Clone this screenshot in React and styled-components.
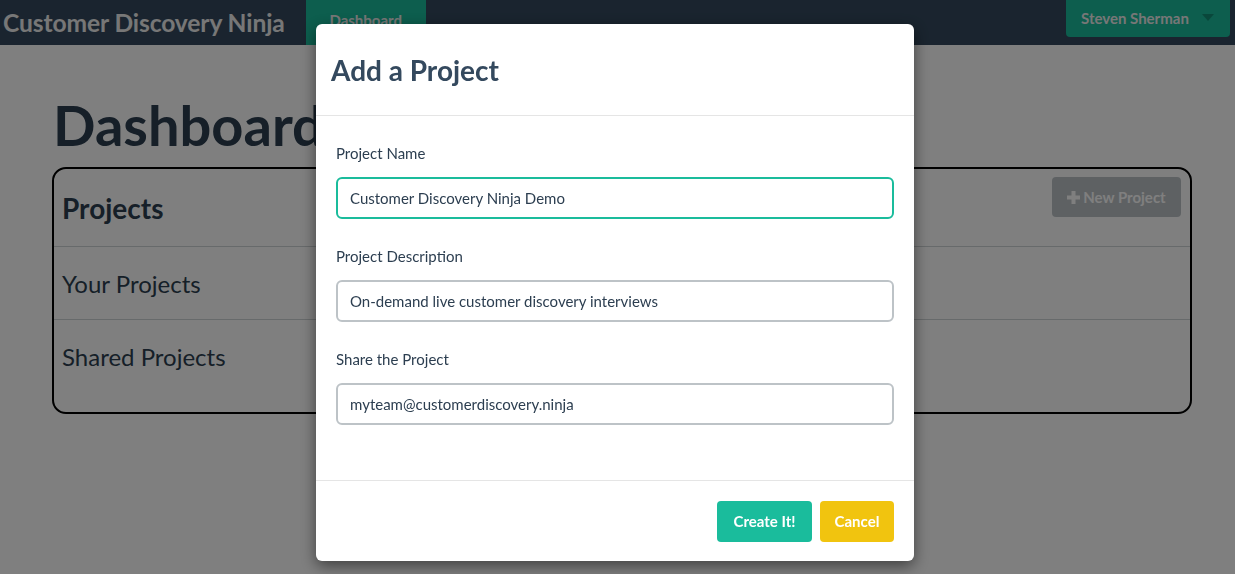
import React from 'react'
import styled, { createGlobalStyle } from 'styled-components'

const Global = createGlobalStyle`
  html, body { margin:0; padding:0; }
  body {
    font-family: Lato, "Open Sans", "Liberation Sans", sans-serif;
    background:#ffffff;
    color:#2c3e50;
    height:574px;
    overflow:hidden;
  }
  * { box-sizing:border-box; }
`

const Navbar = styled.nav`
  height:45px;
  background:#34495e;
  display:flex;
  align-items:stretch;
  padding:0 5px 0 3px;
`

const Brand = styled.div`
  font-size:24.6px;
  font-weight:700;
  color:#eeeeee;
  display:flex;
  align-items:center;
  margin-right:21px;
  letter-spacing:-0.1px;
`

const NavTab = styled.div`
  background:#1abc9c;
  color:#eeeeee;
  font-weight:700;
  font-size:15px;
  width:120px;
  display:flex;
  justify-content:center;
  padding-top:11px;
`

const UserMenu = styled.div`
  margin-left:auto;
  height:37px;
  width:164px;
  background:#1abc9c;
  border-radius:0 0 4px 4px;
  color:#eeeeee;
  font-weight:700;
  font-size:15px;
  display:flex;
  align-items:center;
  padding:0 0 2px 15px;
`

const Caret = styled.span`
  margin-left:auto;
  margin-right:16px;
  width:0;
  height:0;
  border-left:6px solid transparent;
  border-right:6px solid transparent;
  border-top:7px solid #128f76;
`

const Main = styled.main`
  padding:0 43px 0 52px;
`

const PageTitle = styled.h1`
  margin:48px 0 10px 1px;
  font-size:56px;
  line-height:64px;
  font-weight:700;
  color:#2c3e50;
`

const Panel = styled.section`
  border:2px solid #000;
  border-radius:14px;
  height:247px;
`

const PanelRow = styled.div`
  height:${p => p.$h}px;
  display:flex;
  align-items:center;
  justify-content:space-between;
  padding:0 8px 0 8px;
  border-bottom:${p => (p.$last ? 'none' : '1px solid #cfd4d6')};
`

const PanelTitle = styled.h2`
  margin:0;
  font-size:28px;
  font-weight:700;
  color:#2c3e50;
`

const RowTitle = styled.h3`
  margin:0;
  font-size:24px;
  font-weight:400;
  color:#2c3e50;
`

const GrayButton = styled.button`
  align-self:flex-start;
  margin-top:8px;
  background:#bdc3c7;
  border:none;
  border-radius:4px;
  color:#ffffff;
  font-family:inherit;
  font-weight:700;
  font-size:15px;
  height:40px;
  width:129px;
  display:flex;
  align-items:center;
  justify-content:center;
  gap:3px;
  margin-right:1px;
`

const Overlay = styled.div`
  position:fixed;
  inset:0;
  background:rgba(0,0,0,0.5);
  display:flex;
  justify-content:center;
  padding-right:5px;
`

const Modal = styled.div`
  margin-top:24px;
  width:598px;
  height:537px;
  background:#ffffff;
  border-radius:6px;
  box-shadow:0 5px 15px rgba(0,0,0,0.5);
  display:flex;
  flex-direction:column;
`

const ModalHeader = styled.div`
  height:92px;
  border-bottom:1px solid #e5e5e5;
  display:flex;
  align-items:center;
  padding:0 15px;
`

const ModalTitle = styled.h4`
  margin:0;
  font-size:28px;
  font-weight:700;
  color:#34495e;
`

const ModalBody = styled.div`
  flex:1;
  padding:27px 20px 0;
  display:flex;
  flex-direction:column;
  gap:27px;
  border-bottom:1px solid #e5e5e5;
`

const Field = styled.div`
  display:flex;
  flex-direction:column;
`

const Label = styled.label`
  font-size:15px;
  color:#2c3e50;
  margin-bottom:14px;
  line-height:20px;
`

const Input = styled.input`
  height:42px;
  border:2px solid ${p => (p.$focus ? '#1abc9c' : '#bdc3c7')};
  border-radius:6px;
  padding:0 12px;
  font-family:inherit;
  font-size:15px;
  color:#2c3e50;
  outline:none;
  caret-color:#2c3e50;
`

const ModalFooter = styled.div`
  height:80px;
  display:flex;
  justify-content:flex-end;
  align-items:center;
  gap:8px;
  padding:0 20px 0 0;
`

const Button = styled.button`
  background:${p => p.$bg};
  border:none;
  border-radius:4px;
  color:#ffffff;
  font-family:inherit;
  font-weight:700;
  font-size:15px;
  height:41px;
  width:${p => p.$w}px;
`

const PlusIcon = () => (
  <svg width="13" height="13" viewBox="0 0 13 13">
    <rect x="4.5" y="0" width="4" height="13" fill="#fff" />
    <rect x="0" y="4.5" width="13" height="4" fill="#fff" />
  </svg>
)

const App = () => {
  return (
    <>
      <Global />
      <Navbar>
        <Brand>Customer Discovery Ninja</Brand>
        <NavTab>Dashboard</NavTab>
        <UserMenu>
          Steven Sherman
          <Caret />
        </UserMenu>
      </Navbar>
      <Main>
        <PageTitle>Dashboard</PageTitle>
        <Panel>
          <PanelRow $h={78}>
            <PanelTitle>Projects</PanelTitle>
            <GrayButton><PlusIcon /> New Project</GrayButton>
          </PanelRow>
          <PanelRow $h={73}>
            <RowTitle>Your Projects</RowTitle>
          </PanelRow>
          <PanelRow $h={73} $last>
            <RowTitle>Shared Projects</RowTitle>
          </PanelRow>
        </Panel>
      </Main>
      <Overlay>
        <Modal>
          <ModalHeader>
            <ModalTitle>Add a Project</ModalTitle>
          </ModalHeader>
          <ModalBody>
            <Field>
              <Label>Project Name</Label>
              <Input $focus defaultValue="Customer Discovery Ninja Demo" />
            </Field>
            <Field>
              <Label>Project Description</Label>
              <Input defaultValue="On-demand live customer discovery interviews" />
            </Field>
            <Field>
              <Label>Share the Project</Label>
              <Input defaultValue="myteam@customerdiscovery.ninja" />
            </Field>
          </ModalBody>
          <ModalFooter>
            <Button $bg="#1abc9c" $w={95}>Create It!</Button>
            <Button $bg="#f1c40f" $w={74}>Cancel</Button>
          </ModalFooter>
        </Modal>
      </Overlay>
    </>
  )
}

export default App
